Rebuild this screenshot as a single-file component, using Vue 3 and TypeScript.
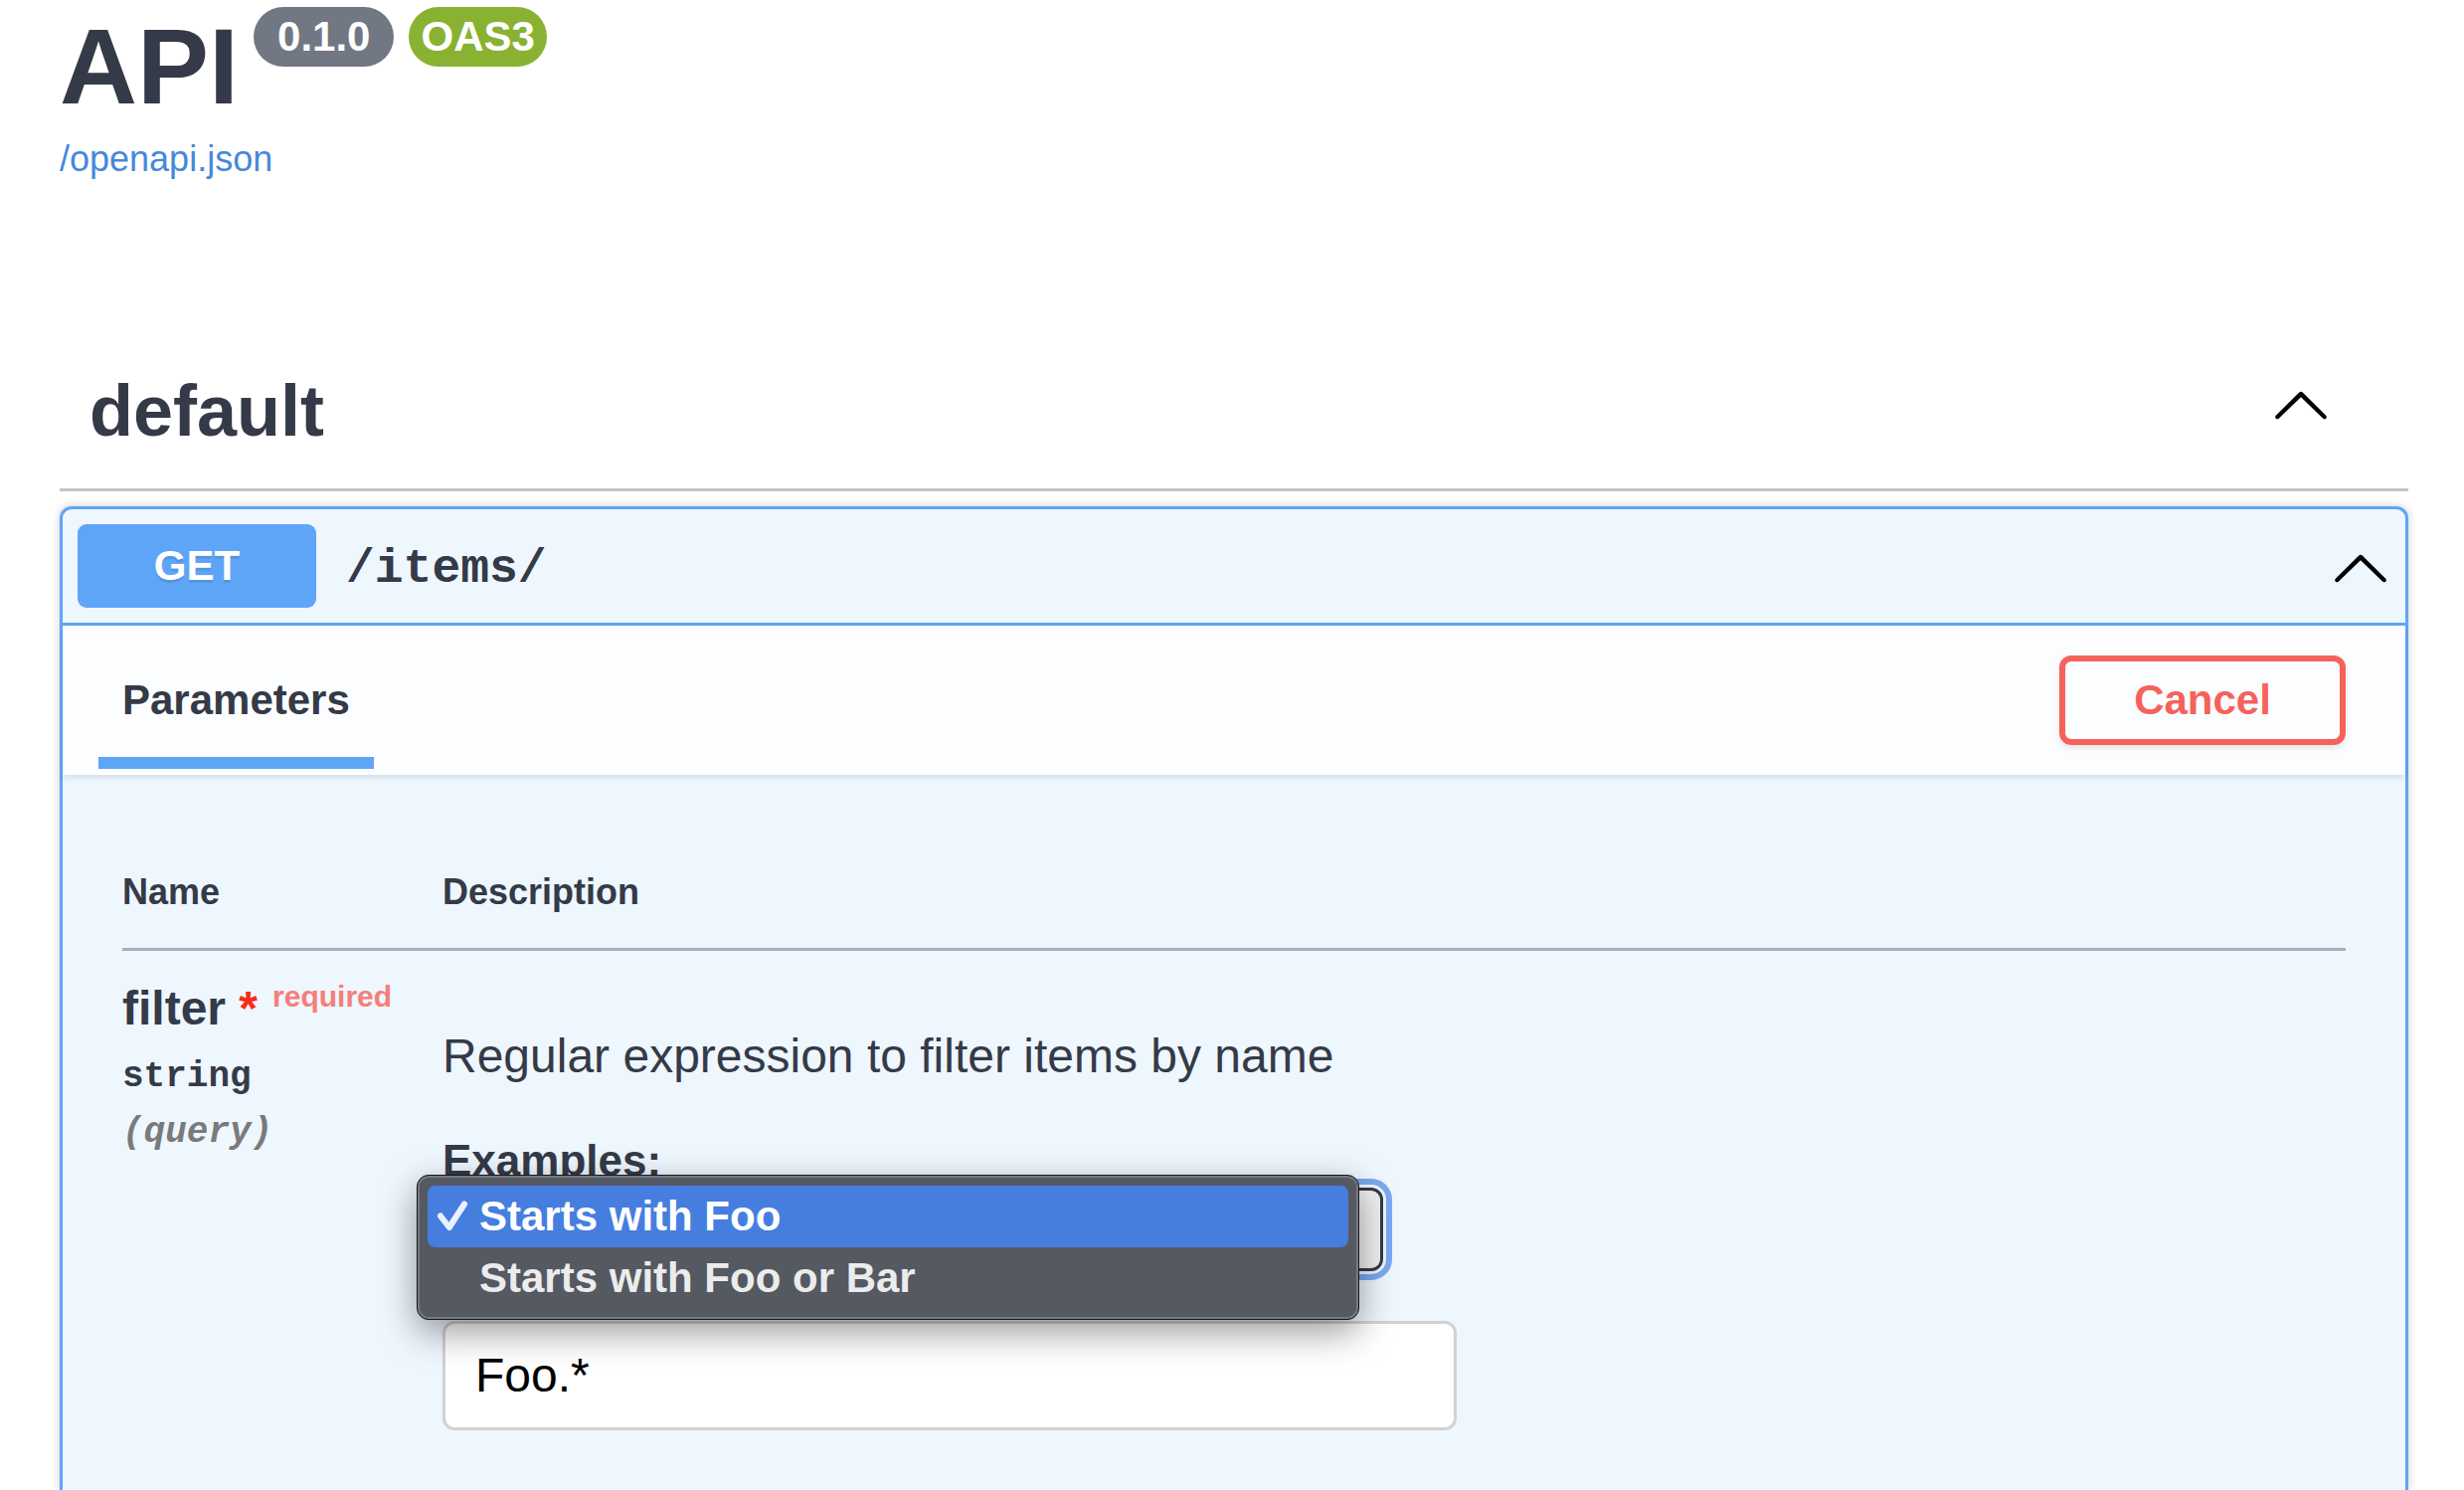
<script setup lang="ts">
import { computed, ref } from 'vue'

interface Example {
  key: string
  summary: string
  value: string
}

const examples: Example[] = [
  { key: 'foo', summary: 'Starts with Foo', value: 'Foo.*' },
  { key: 'foo-or-bar', summary: 'Starts with Foo or Bar', value: '(Foo|Bar).*' },
]

const arrowPath =
  'M17.418 14.908c.272.268.709.268.979 0s.271-.701 0-.969L10.489 6.109c-.27-.268-.707-.268-.979 0L1.602 13.939c-.27.268-.27.701 0 .969.271.268.709.268.979 0L10 7.767z'

const selected = ref('foo')
const menuOpen = ref(true)
const filter = ref(examples[0].value)
const tagOpen = ref(true)
const operationOpen = ref(true)
const current = computed(() => examples.find((e) => e.key === selected.value) ?? examples[0])

function choose(example: Example) {
  selected.value = example.key
  filter.value = current.value.value
  menuOpen.value = false
}
</script>

<template>
  <main class="page">
    <header class="info">
      <div class="title-row">
        <h1>API</h1>
        <span class="badge version">0.1.0</span>
        <span class="badge oas">OAS3</span>
      </div>
      <a class="spec-link" href="/openapi.json">/openapi.json</a>
    </header>

    <section class="tag">
      <div class="tag-header">
        <h2>default</h2>
        <button class="arrow tag-arrow" type="button" aria-label="Collapse default" @click="tagOpen = !tagOpen">
          <svg viewBox="0 0 20 20" aria-hidden="true"><path :d="arrowPath" /></svg>
        </button>
      </div>

      <article v-if="tagOpen" class="operation">
        <div class="summary">
          <span class="method">GET</span>
          <span class="path">/items/</span>
          <button class="arrow" type="button" aria-label="Collapse operation" @click="operationOpen = !operationOpen">
            <svg viewBox="0 0 20 20" aria-hidden="true"><path :d="arrowPath" /></svg>
          </button>
        </div>

        <template v-if="operationOpen">
          <div class="section-header">
            <h3>Parameters</h3>
            <button class="cancel" type="button">Cancel</button>
          </div>

          <div class="table-wrap">
            <table>
              <thead>
                <tr>
                  <th class="col-name" scope="col">Name</th>
                  <th scope="col">Description</th>
                </tr>
              </thead>
              <tbody>
                <tr>
                  <td>
                    <label class="param-name" for="filter-value">
                      filter <span class="star">*</span><span class="required">required</span>
                    </label>
                    <div class="param-type">string</div>
                    <div class="param-type param-in">(query)</div>
                  </td>
                  <td>
                    <p class="description">Regular expression to filter items by name</p>
                    <label class="examples-label" for="examples">Examples:</label>
                    <div class="select-wrap">
                      <select id="examples" v-model="selected">
                        <option v-for="e in examples" :key="e.key" :value="e.key">{{ e.summary }}</option>
                      </select>
                      <ul v-if="menuOpen" class="menu" role="listbox" aria-label="Examples">
                        <li
                          v-for="e in examples"
                          :key="e.key"
                          role="option"
                          :aria-selected="e.key === selected"
                          :class="['menu-item', { active: e.key === selected }]"
                          @click="choose(e)"
                        >
                          <span class="check">
                            <svg v-if="e.key === selected" viewBox="0 0 32 32" aria-hidden="true">
                              <path d="M3 15.500L11.800 27L27 3.500" />
                            </svg>
                          </span>
                          {{ e.summary }}
                        </li>
                      </ul>
                    </div>
                    <input id="filter-value" v-model="filter" type="text" />
                  </td>
                </tr>
              </tbody>
            </table>
          </div>
        </template>
      </article>
    </section>
  </main>
</template>

<style>
body {
  margin: 0;
  background: #fff;
}
</style>

<style scoped>
* {
  box-sizing: border-box;
}

.page {
  display: flex;
  flex-direction: column;
  min-height: 100vh;
  padding: 0 56px 0 60px;
  color: #343a47;
  font-family: 'Liberation Sans', Arial, sans-serif;
}

h1,
h2,
h3,
p {
  margin: 0;
}

.title-row {
  display: flex;
  align-items: flex-start;
  gap: 15px;
  padding-top: 6px;
}

h1 {
  font-size: 108px;
  line-height: 122px;
}

.badge {
  margin-top: 1px;
  border-radius: 30px;
  color: #fff;
  font-size: 42px;
  font-weight: 700;
  line-height: 60px;
}

.version {
  padding: 0 24px;
  background: #717783;
}

.oas {
  padding: 0 12px;
  background: #89b232;
}

.spec-link {
  display: block;
  width: fit-content;
  margin-top: 11px;
  color: #4788da;
  font-size: 36px;
  line-height: 42px;
  text-decoration: none;
}

.tag {
  display: flex;
  flex: 1;
  flex-direction: column;
  margin-top: 154px;
}

.tag-header {
  display: flex;
  align-items: center;
  justify-content: space-between;
  padding: 36px 78px 36px 30px;
  border-bottom: 3px solid #c4c4ca;
}

h2 {
  font-size: 72px;
  line-height: 84px;
}

.arrow {
  padding: 2px 0 0;
  border: 0;
  background: none;
}

.arrow svg {
  display: block;
  width: 60px;
  height: 60px;
}

.tag-arrow {
  padding-bottom: 16px;
}

.operation {
  flex: 1;
  margin-top: 15px;
  border: 3px solid #5fa5f7;
  border-bottom: 0;
  border-radius: 12px 12px 0 0;
  background: #eef6fe;
  box-shadow: 0 0 9px rgba(0, 0, 0, 0.2);
}

.summary {
  display: flex;
  align-items: center;
  padding: 15px;
  border-bottom: 3px solid #5fa5f7;
}

.method {
  width: 240px;
  border-radius: 9px;
  background: #5fa5f7;
  color: #fff;
  font-size: 42px;
  font-weight: 700;
  line-height: 84px;
  text-align: center;
  text-shadow: 0 3px 0 rgba(0, 0, 0, 0.1);
}

.path {
  flex: 1;
  padding: 6px 30px 0;
  font-family: 'Liberation Mono', 'Courier New', monospace;
  font-size: 48px;
  font-weight: 700;
  line-height: 54px;
}

.section-header {
  display: flex;
  align-items: flex-start;
  justify-content: space-between;
  padding: 30px 60px 6px 36px;
  background: #fcfdff;
  box-shadow: 0 3px 6px rgba(0, 0, 0, 0.1);
}

h3 {
  padding: 0 24px 12px;
  border-bottom: 12px solid #5fa5f7;
  font-size: 42px;
  line-height: 90px;
}

.cancel {
  width: 288px;
  height: 90px;
  padding: 0;
  border: 6px solid #f5625b;
  border-radius: 12px;
  background: transparent;
  box-shadow: 0 3px 6px rgba(0, 0, 0, 0.1);
  color: #f5625b;
  font-family: inherit;
  font-size: 42px;
  font-weight: 700;
}

.table-wrap {
  padding: 60px;
}

table {
  width: 100%;
  border-spacing: 0;
}

th {
  padding: 37px 0 35px;
  border-bottom: 3px solid #a6afbb;
  font-size: 36px;
  line-height: 42px;
  text-align: left;
}

.col-name {
  width: 322px;
}

td {
  padding: 31px 0 0;
  vertical-align: top;
}

.param-name {
  display: block;
  font-size: 48px;
  font-weight: 700;
  line-height: 54px;
  white-space: nowrap;
}

.star {
  color: #fb2b1a;
}

.required {
  padding-left: 15px;
  color: #f57f78;
  font-size: 30px;
  line-height: 24px;
  vertical-align: 18px;
}

.param-name + .param-type {
  margin-top: 14px;
}

.param-type {
  font-family: 'Liberation Mono', 'Courier New', monospace;
  font-size: 36px;
  font-weight: 700;
  line-height: 56px;
}

.param-in {
  color: #7a7a7a;
  font-style: italic;
}

.description {
  margin-top: 48px;
  font-size: 48px;
  line-height: 54px;
}

.examples-label {
  display: block;
  margin-top: 51px;
  font-size: 44px;
  font-weight: 700;
  line-height: 54px;
}

.select-wrap {
  position: relative;
  width: 946px;
  max-width: 100%;
}

select {
  display: block;
  width: 100%;
  height: 84px;
  padding: 0 30px;
  border: 3px solid #343a47;
  border-radius: 12px;
  outline: 6px solid #7ba9f1;
  outline-offset: 3px;
  appearance: none;
  background: #f0f0f0;
  color: inherit;
  font-family: inherit;
  font-size: 42px;
  font-weight: 700;
}

.menu {
  position: absolute;
  top: -13px;
  right: 24px;
  left: -26px;
  margin: 0;
  padding: 10px;
  border: 1px solid #15171b;
  border-radius: 12px;
  background: #555962;
  box-shadow:
    inset 0 0 0 2px #777a82,
    0 12px 36px rgba(0, 0, 0, 0.4);
  list-style: none;
}

.menu-item {
  display: flex;
  align-items: center;
  gap: 10px;
  height: 62px;
  padding-left: 10px;
  border-radius: 8px;
  color: #ececec;
  font-size: 42px;
  font-weight: 700;
  cursor: default;
}

.menu-item.active {
  background: #467ee0;
  color: #fff;
}

.check,
.check svg {
  display: block;
  width: 32px;
  height: 32px;
}

.check path {
  fill: none;
  stroke: #eaf0fd;
  stroke-width: 6;
  stroke-linecap: round;
  stroke-linejoin: round;
}

input {
  display: block;
  width: 1020px;
  max-width: 100%;
  height: 110px;
  margin-top: 50px;
  padding: 0 30px 2px;
  border: 3px solid #d2d2d2;
  border-radius: 12px;
  background: #fff;
  color: #000;
  font-family: inherit;
  font-size: 48px;
}
</style>
